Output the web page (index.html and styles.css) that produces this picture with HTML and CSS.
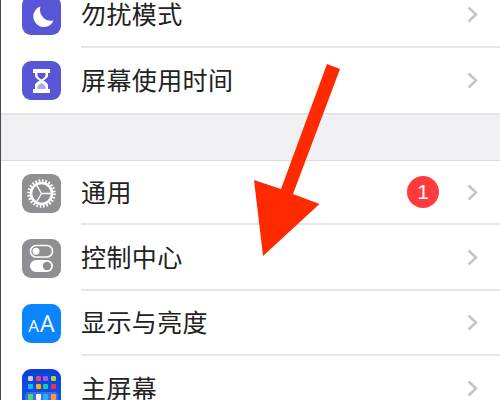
FILE: index.html
```html
<!DOCTYPE html>
<html lang="zh">
<head>
<meta charset="utf-8">
<title>设置</title>
<link rel="stylesheet" href="styles.css">
</head>
<body>
<main class="screen">
  <section class="group group-first">
    <div class="row row-cut">
      <span class="icon icon-purple">
        <svg viewBox="0 0 39 39"><path d="M18.500 10.500A10.500 10.500 0 1 0 31.500 24.500 11 11 0 0 1 18.500 10.500Z" fill="#fff"/></svg>
      </span>
      <div class="row-body"><span class="label">勿扰模式</span><svg class="chev" viewBox="0 0 11 17"><path d="M1.500 1.500 9 8.500 1.500 15.500"/></svg></div>
    </div>
    <div class="row row-last">
      <span class="icon icon-purple">
        <svg viewBox="0 0 39 39"><path d="M11 8h17v4h-2v2.500c0 2.500-3.500 4-4.500 5 1 1 4.500 2.500 4.500 5V28h2v4H11v-4h2v-3.500c0-2.500 3.500-4 4.500-5-1-1-4.500-2.500-4.500-5V12h-2Z" fill="#fff"/><path d="M15.500 12h8v2c0 2-2.500 3.500-4 4.500-1.500-1-4-2.500-4-4.500Z" fill="#5856d6"/><path d="M19.500 22c-1.500 1-4 2.500-4 3.500V28h8v-2.500c0-1-2.500-2.500-4-3.500Z" fill="#5856d6" opacity=".5"/></svg>
      </span>
      <div class="row-body"><span class="label">屏幕使用时间</span><svg class="chev" viewBox="0 0 11 17"><path d="M1.500 1.500 9 8.500 1.500 15.500"/></svg></div>
    </div>
  </section>

  <div class="gap"></div>

  <section class="group">
    <div class="row row-short">
      <span class="icon icon-gray">
        <svg viewBox="0 0 39 39"><circle cx="19.500" cy="19.500" r="10.500" fill="none" stroke="#fff" stroke-width="2.600"/><circle cx="19.500" cy="19.500" r="12.800" fill="none" stroke="#fff" stroke-width="3" stroke-dasharray="1.650 1.700"/><path d="M19.500 19.500 14.500 10.840M19.500 19.500H29.500M19.500 19.500 14.500 28.160" stroke="#fff" stroke-width="1.300" fill="none"/></svg>
      </span>
      <div class="row-body"><span class="label">通用</span><span class="badge">1</span><svg class="chev" viewBox="0 0 11 17"><path d="M1.500 1.500 9 8.500 1.500 15.500"/></svg></div>
    </div>
    <div class="row row-tall">
      <span class="icon icon-gray">
        <svg viewBox="0 0 39 39"><rect x="8.500" y="6.500" width="22" height="11.500" rx="5.750" fill="none" stroke="#fff" stroke-width="1.600"/><circle cx="14" cy="12.300" r="3.500" fill="#fff"/><rect x="8" y="21" width="23" height="12" rx="6" fill="#fff"/><circle cx="25" cy="27" r="4.200" fill="#8e8e93"/></svg>
      </span>
      <div class="row-body"><span class="label">控制中心</span><svg class="chev" viewBox="0 0 11 17"><path d="M1.500 1.500 9 8.500 1.500 15.500"/></svg></div>
    </div>
    <div class="row">
      <span class="icon icon-blue"><span class="aa"><span class="aa-small">A</span><span class="aa-big">A</span></span></span>
      <div class="row-body"><span class="label">显示与亮度</span><svg class="chev" viewBox="0 0 11 17"><path d="M1.500 1.500 9 8.500 1.500 15.500"/></svg></div>
    </div>
    <div class="row row-last">
      <span class="icon icon-home">
        <svg viewBox="0 0 39 39"><g><rect x="6" y="7" width="5" height="5" rx="1" fill="#c9ccd6"/><rect x="14" y="7" width="5" height="5" rx="1" fill="#ee4266"/><rect x="21" y="7" width="5" height="5" rx="1" fill="#a15ce8"/><rect x="29" y="7" width="5" height="5" rx="1" fill="#a3d52a"/><rect x="6" y="15" width="5" height="5" rx="1" fill="#1fb5f2"/><rect x="14" y="15" width="5" height="5" rx="1" fill="#f5b400"/><rect x="21" y="15" width="5" height="5" rx="1" fill="#18c9a0"/><rect x="29" y="15" width="5" height="5" rx="1" fill="#f0324a"/><rect x="3" y="23" width="33" height="13" rx="4" fill="#3d6ee8"/><rect x="6" y="25" width="5" height="6" rx="1" fill="#4cd964"/><rect x="14" y="25" width="5" height="6" rx="1" fill="#fff"/><rect x="21" y="25" width="5" height="6" rx="1" fill="#1fb5f2"/><rect x="29" y="25" width="5" height="6" rx="1" fill="#ff9a3c"/></g></svg>
      </span>
      <div class="row-body"><span class="label">主屏幕</span><svg class="chev" viewBox="0 0 11 17"><path d="M1.500 1.500 9 8.500 1.500 15.500"/></svg></div>
    </div>
  </section>

  <svg class="arrow" viewBox="0 0 500 400"><path d="M327 64 340 69 293 194 319.500 204 263 256 254 180 281 189Z" fill="#ff2a00"/></svg>
</main>
</body>
</html>
```

FILE: styles.css
```css
* { box-sizing: border-box; }
html, body { margin: 0; padding: 0; background: #fff; }
.screen {
  position: relative;
  width: 500px;
  height: 400px;
  overflow: hidden;
  border-left: 1px solid #48484a;
  font-family: "Noto Sans CJK SC", "Noto Sans", sans-serif;
  color: #222;
}
.group { background: #fff; border-top: 1px solid #dcdcde; }
.group-first { margin-top: -18px; border-top: 0; }
.row {
  display: flex;
  align-items: center;
  gap: 20px;
  height: 65px;
  padding-left: 21px;
}
.row-cut { height: 66px; }
.row-short { height: 64px; }
.row-tall { height: 66px; }
.row-body {
  flex: 1;
  height: 100%;
  display: flex;
  align-items: center;
  padding-right: 22px;
  border-bottom: 2px solid #e6e6e8;
}
.row-last .row-body { border-bottom: 0; }
.label { flex: 1; padding-bottom: 3px; font-size: 25px; line-height: 34px; letter-spacing: .4px; }
.icon {
  flex: none;
  width: 39px;
  height: 39px;
  border-radius: 9px;
  display: flex;
  align-items: center;
  justify-content: center;
  overflow: hidden;
}
.icon svg { display: block; width: 39px; height: 39px; }
.icon-purple { background: #5856d6; }
.icon-gray { background: #8e8e93; }
.icon-blue { background: #0a84ff; }
.icon-home { background: linear-gradient(#0a3fd8, #1557ee); }
.aa { display: flex; align-items: baseline; gap: 1px; color: #fff; font-family: "Open Sans", sans-serif; font-weight: 400; line-height: 1; }
.aa-small { font-size: 17px; }
.aa-big { font-size: 23px; }
.chev { flex: none; width: 11px; height: 17px; fill: none; stroke: #c4c4c7; stroke-width: 2.500; }
.badge {
  flex: none;
  width: 32px;
  height: 32px;
  margin: 0 28px 1px 0;
  border-radius: 50%;
  background: #ff3b3b;
  color: #fff;
  font-family: "Liberation Sans", sans-serif;
  font-size: 21px;
  line-height: 32px;
  text-align: center;
}
.gap { height: 47px; background: #efeff4; border-top: 2px solid #e4e4e6; }
.arrow { position: absolute; left: -1px; top: 0; width: 500px; height: 400px; }
```
